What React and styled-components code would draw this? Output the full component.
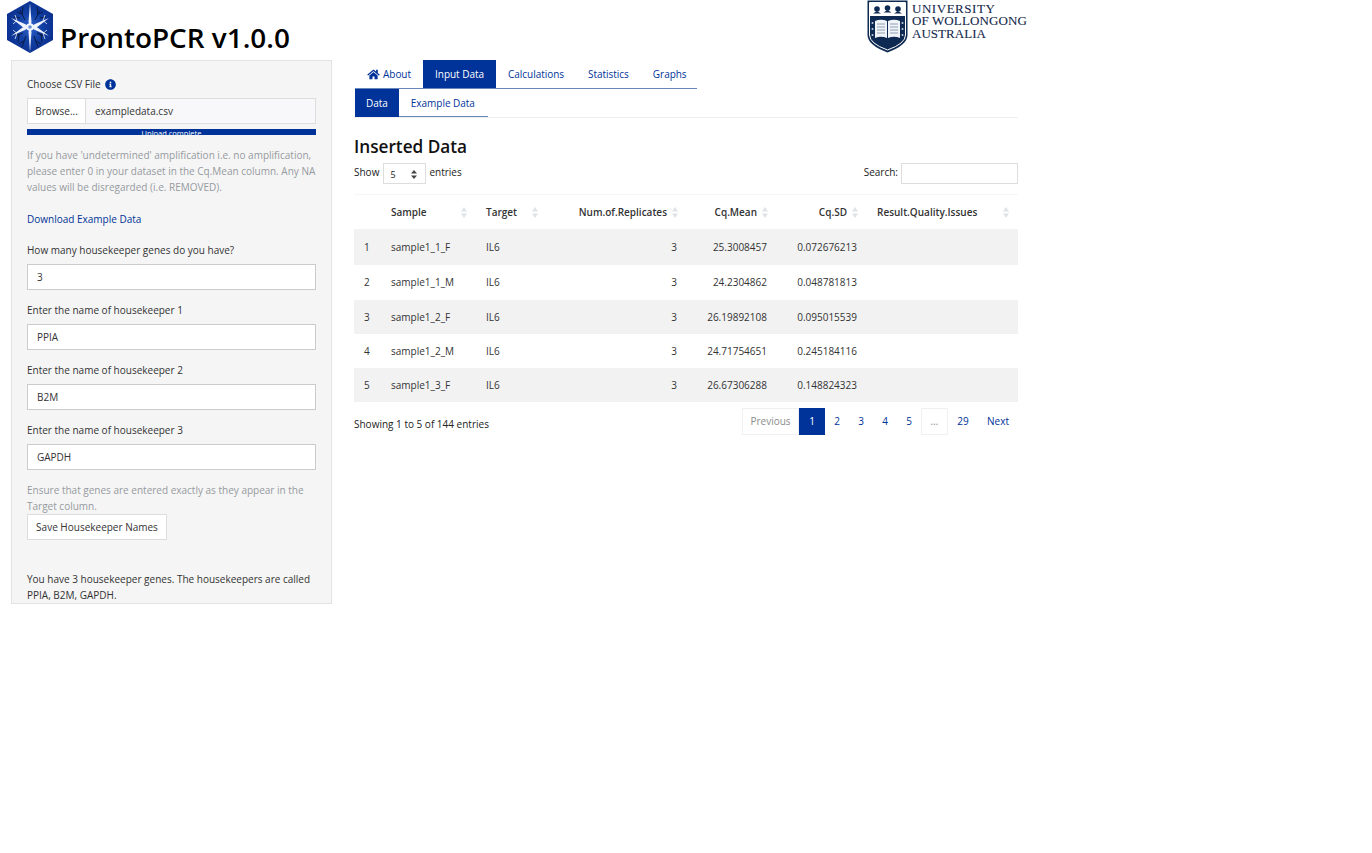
import React from 'react';
import styled, { createGlobalStyle } from 'styled-components';

const Global = createGlobalStyle`
  html, body { margin: 0; padding: 0; background: #fff; }
  body { font-family: "Open Sans", "Noto Sans", sans-serif; font-size: 10px; color: #333; }
  * { box-sizing: border-box; }
`;

const Page = styled.div`
  width: 1372px;
  height: 853px;
  overflow: hidden;
`;
const Header = styled.header`
  display: flex;
  height: 60px;
  width: 1040px;
  align-items: flex-start;
  padding-left: 6px;
`;
const Title = styled.h1`
  margin: 18px 0 0 6px;
  font-size: 27.900px;
  line-height: 38px;
  font-weight: 600;
  color: #000;
  white-space: nowrap;
`;
const UowLogo = styled.div`
  margin-left: auto;
  margin-right: 13px;
  display: flex;
  gap: 4px;
`;
const UowText = styled.div`
  padding-top: 3px;
`;
const UowLine = styled.div`
  font-family: "Liberation Serif", serif;
  font-size: 13px;
  height: 12.400px;
  line-height: 12.400px;
  color: #14284b;
  letter-spacing: ${p => p.$ls}px;
  white-space: nowrap;
  -webkit-text-stroke: .1px #14284b;
`;
const Body = styled.div`
  display: flex;
  align-items: flex-start;
  padding-left: 11px;
  gap: 22px;
`;
const Sidebar = styled.aside`
  width: 321px;
  height: 544px;
  background: #f5f5f5;
  border: 1px solid #e3e3e3;
  padding: 15px 15px 0;
`;
const Label = styled.div`
  line-height: 16px;
  height: 16px;
  margin-bottom: ${p => p.$mb ?? 6}px;
  display: flex;
  align-items: center;
  gap: 4px;
  white-space: nowrap;
`;
const FileRow = styled.div`
  display: flex;
  height: 26px;
`;
const BrowseBtn = styled.div`
  width: 59px;
  background: #fff;
  border: 1px solid #ddd;
  display: flex;
  align-items: center;
  justify-content: center;
`;
const FileName = styled.div`
  flex: 1;
  background: #f8f8fb;
  border: 1px solid #ddd;
  border-left: 0;
  padding-left: 9px;
  display: flex;
  align-items: center;
`;
const Progress = styled.div`
  height: 6px;
  margin-top: 5px;
  background: #003399;
  color: #fff;
  font-size: 7.500px;
  line-height: 8px;
  text-align: center;
  overflow: hidden;
`;
const Help = styled.p`
  margin: ${p => p.$mt ?? 0}px 0 0;
  color: #969a9f;
  line-height: 16px;
`;
const DownloadLink = styled.a`
  display: block;
  color: #003399;
  line-height: 16px;
  margin: 16px 0 15px;
`;
const TextInput = styled.div`
  height: 26px;
  background: #fff;
  border: 1px solid #ccc;
  padding-left: 9px;
  display: flex;
  align-items: center;
  margin-bottom: 12px;
`;
const SaveBtn = styled.div`
  width: 140px;
  height: 26px;
  background: #fff;
  border: 1px solid #ddd;
  display: flex;
  align-items: center;
  justify-content: center;
`;
const Summary = styled.p`
  margin: 31px 0 0;
  line-height: 16px;
`;
const Main = styled.main`
  width: 664px;
`;
const TabBar = styled.nav`
  display: flex;
  margin-left: 1px;
  width: 342px;
  height: 29px;
  border-bottom: 1px solid #6a86bd;
`;
const SubTabBar = styled(TabBar)`
  width: 133px;
  height: 28px;
`;
const TabRule = styled.div`
  border-bottom: 1px solid #eee;
`;
const Tab = styled.div`
  height: 28px;
  padding: 0 ${p => p.$px ?? 12}px;
  display: flex;
  align-items: center;
  gap: 3px;
  white-space: nowrap;
  letter-spacing: -.03px;
  color: ${p => (p.$active ? '#fff' : '#003399')};
  background: ${p => (p.$active ? '#003399' : 'transparent')};
`;
const Heading = styled.h3`
  margin: 19px 0 0;
  font-size: 17.200px;
  line-height: 20px;
  font-weight: 600;
  color: #111;
`;
const Controls = styled.div`
  display: flex;
  justify-content: space-between;
  align-items: center;
  height: 21px;
  margin-top: 6px;
  color: #222;
`;
const ControlGroup = styled.div`
  display: flex;
  align-items: flex-start;
  gap: 3px;
  line-height: 19px;
`;
const Select = styled.div`
  width: 43px;
  height: 21px;
  margin-left: 1px;
  border: 1px solid #ddd;
  padding: 2px 8px 0 6px;
  display: flex;
  align-items: center;
  justify-content: space-between;
  font-size: 9px;
`;
const SearchBox = styled.div`
  width: 117px;
  height: 21px;
  border: 1px solid #ddd;
`;
const Table = styled.table`
  border-collapse: collapse;
  width: 664px;
  table-layout: fixed;
  margin-top: 10px;
`;
const Th = styled.th`
  height: 34px;
  font-weight: 600;
  text-align: ${p => (p.$right ? 'right' : 'left')};
  padding: 0 20px 0 10px;
  position: relative;
  border-top: 1px solid #f6f6f6;
  white-space: nowrap;
`;
const Td = styled.td`
  height: ${p => p.$h}px;
  text-align: ${p => (p.$right ? 'right' : 'left')};
  padding: ${p => p.$h > 35 ? 1 : 0}px 10px 0;
`;
const Tr = styled.tr`
  background: ${p => (p.$odd ? '#f2f2f2' : '#fff')};
`;
const SortIcon = styled.svg`
  position: absolute;
  right: 8px;
  top: 11px;
  width: 8px;
  height: 13px;
`;
const Footer = styled.div`
  display: flex;
  justify-content: space-between;
  align-items: flex-start;
  margin-top: 6px;
  color: #222;
`;
const Info = styled.div`
  padding-top: 8px;
  line-height: 16px;
`;
const Pager = styled.div`
  display: flex;
  height: 27px;
`;
const PageItem = styled.div`
  width: ${p => p.$w ?? 24}px;
  display: flex;
  align-items: center;
  justify-content: center;
  color: ${p => (p.$active ? '#fff' : p.$muted ? '#8c8c8c' : '#003399')};
  background: ${p => (p.$active ? '#003399' : '#fff')};
  border: 1px solid ${p => (p.$active ? '#003399' : p.$border ? '#f0f0f0' : 'transparent')};
`;

const Sort = () => (
  <SortIcon viewBox="0 0 8 13">
    <path d="M4 1 L7 5.500 H1 Z" fill="#dfe3e8" />
    <path d="M4 12 L7 7.500 H1 Z" fill="#dfe3e8" />
  </SortIcon>
);

const SelectArrows = () => (
  <svg width="6" height="9" viewBox="0 0 6 9">
    <path d="M3 0 L6 3.500 H0 Z M3 9 L6 5.500 H0 Z" fill="#444" />
  </svg>
);

const Neuron = () => (
  <svg width="48" height="54" viewBox="0 0 48 54">
    <defs>
      <radialGradient id="hexFill" cx="50%" cy="50%" r="55%">
        <stop offset="0%" stopColor="#2f62cc" />
        <stop offset="50%" stopColor="#123fa3" />
        <stop offset="100%" stopColor="#0b2f8e" />
      </radialGradient>
    </defs>
    <polygon points="24,1 47,14 47,40 24,53 1,40 1,14" fill="url(#hexFill)" />
    <g stroke="#071a45" strokeWidth="1" fill="none">
      <path d="M19 20 L14 10 M16 14 L11 12 M16 14 L17 7 M14 18 L8 17" />
      <path d="M29 20 L34 10 M32 14 L37 12 M32 14 L31 7 M34 18 L40 17" />
      <path d="M17 33 L10 36 M13 35 L8 32 M13 35 L12 42" />
      <path d="M31 33 L38 36 M35 35 L40 32 M35 35 L36 42" />
      <path d="M20 36 L16 47 M18 41 L13 44 M28 36 L32 47 M30 41 L35 44" />
    </g>
    <g fill="#eef3fc">
      <polygon points="24,3 25.500,22 24,27 22.500,22" />
      <polygon points="24,52 25.500,32 24,27 22.500,32" />
      <polygon points="5,18 19,24 24,27 18,28" />
      <polygon points="43,18 29,24 24,27 30,28" />
      <polygon points="5,36 19,30 24,27 18,26.500" />
      <polygon points="43,36 29,30 24,27 30,26.500" />
    </g>
    <g stroke="#e6edfa" strokeWidth=".8" fill="none">
      <path d="M11 20.500 L7 24 M11 20.500 L9 15 M37 20.500 L41 24 M37 20.500 L39 15 M11 33.500 L7 30 M11 33.500 L9 39 M37 33.500 L41 30 M37 33.500 L39 39" />
    </g>
    <circle cx="24" cy="27" r="3.800" fill="#f2f6fe" />
    <circle cx="24" cy="27" r="1.800" fill="#6a90d6" />
  </svg>
);

const Shield = () => (
  <svg width="41" height="53" viewBox="0 0 41 53">
    <path d="M.5 .5 H40.500 V35 Q40.500 45 20.500 52.500 Q.5 45 .5 35 Z" fill="#0f2a52" />
    <path d="M2.500 2.500 H38.500 V35 Q38.500 43.500 20.500 50 Q2.500 43.500 2.500 35 Z" fill="none" stroke="#fff" strokeWidth="1" />
    <rect x="3" y="3" width="35" height="13" fill="#fff" />
    <g fill="#0f2a52">
      <circle cx="10" cy="9" r="2.800" />
      <circle cx="20.500" cy="8" r="2.800" />
      <circle cx="31" cy="9" r="2.800" />
      <path d="M6 13.500 L10 11 L14 13.500 Z M16.500 12.500 L20.500 10 L24.500 12.500 Z M27 13.500 L31 11 L35 13.500 Z" />
    </g>
    <path d="M8 21 Q14 18.500 20 21 V38 Q14 35.500 8 38 Z M21 21 Q27 18.500 33 21 V38 Q27 35.500 21 38 Z" fill="#f0f3f7" />
    <path d="M10 24 H18 M10 27 H18 M10 30 H18 M10 33 H18 M23 24 H31 M23 27 H31 M23 30 H31 M23 33 H31" stroke="#7b8aa3" strokeWidth=".8" />
    <g fill="#c5cedb">
      <circle cx="5.500" cy="23" r="1" /><circle cx="5.500" cy="29" r="1" /><circle cx="5.500" cy="35" r="1" />
      <circle cx="35.500" cy="23" r="1" /><circle cx="35.500" cy="29" r="1" /><circle cx="35.500" cy="35" r="1" />
    </g>
  </svg>
);

const Home = () => (
  <svg width="13" height="11" viewBox="0 0 576 512">
    <path fill="#003399" d="M280 148 96 300v164c0 9 7 16 16 16l112-.3c9 0 16-7 16-16V368c0-9 7-16 16-16h64c9 0 16 7 16 16v95.600c0 9 7 16 16 16l112 .4c9 0 16-7 16-16V300L296 148c-4-4-12-4-16 0zM572 251l-84-69V44c0-7-5-12-12-12h-56c-7 0-12 5-12 12v72L318 43c-18-15-43-15-61 0L4 251c-5 4-6 12-2 17l26 31c4 5 12 6 17 2L280 107c4-4 12-4 16 0l235 194c5 4 13 3 17-2l26-31c4-5 3-13-2-17z" />
  </svg>
);

const InfoIcon = () => (
  <svg width="11" height="11" viewBox="0 0 512 512">
    <path fill="#003399" d="M256 8C119 8 8 119 8 256s111 248 248 248 248-111 248-248S393 8 256 8zm0 110c23 0 42 19 42 42s-19 42-42 42-42-19-42-42 19-42 42-42zm56 254c0 7-5 12-12 12h-88c-7 0-12-5-12-12v-24c0-7 5-12 12-12h12v-64h-12c-7 0-12-5-12-12v-24c0-7 5-12 12-12h64c7 0 12 5 12 12v100h12c7 0 12 5 12 12v24z" />
  </svg>
);

const rows = [
  ['1', 'sample1_1_F', 'IL6', '3', '25.3008457', '0.072676213', 36],
  ['2', 'sample1_1_M', 'IL6', '3', '24.2304862', '0.048781813', 35],
  ['3', 'sample1_2_F', 'IL6', '3', '26.19892108', '0.095015539', 34],
  ['4', 'sample1_2_M', 'IL6', '3', '24.71754651', '0.245184116', 34],
  ['5', 'sample1_3_F', 'IL6', '3', '26.67306288', '0.148824323', 34],
];

const colWidths = [27, 95, 71, 140, 90, 90, 151];

export default function App() {
  return (
    <Page>
      <Global />
      <Header>
        <Neuron />
        <Title>ProntoPCR v1.0.0</Title>
        <UowLogo>
          <Shield />
          <UowText>
            <UowLine $ls={0.55}>UNIVERSITY</UowLine>
            <UowLine $ls={0.12}>OF WOLLONGONG</UowLine>
            <UowLine $ls={0.05}>AUSTRALIA</UowLine>
          </UowText>
        </UowLogo>
      </Header>
      <Body>
        <Sidebar>
          <Label $mb={6}>Choose CSV File <InfoIcon /></Label>
          <FileRow>
            <BrowseBtn>Browse...</BrowseBtn>
            <FileName>exampledata.csv</FileName>
          </FileRow>
          <Progress>Upload complete</Progress>
          <Help $mt={12}>If you have 'undetermined' amplification i.e. no amplification, please enter 0 in your dataset in the Cq.Mean column. Any NA values will be disregarded (i.e. REMOVED).</Help>
          <DownloadLink>Download Example Data</DownloadLink>
          <Label>How many housekeeper genes do you have?</Label>
          <TextInput>3</TextInput>
          <Label>Enter the name of housekeeper 1</Label>
          <TextInput>PPIA</TextInput>
          <Label>Enter the name of housekeeper 2</Label>
          <TextInput>B2M</TextInput>
          <Label>Enter the name of housekeeper 3</Label>
          <TextInput>GAPDH</TextInput>
          <Help>Ensure that genes are entered exactly as they appear in the Target column.</Help>
          <SaveBtn>Save Housekeeper Names</SaveBtn>
          <Summary>You have 3 housekeeper genes. The housekeepers are called PPIA, B2M, GAPDH.</Summary>
        </Sidebar>
        <Main>
          <TabBar>
            <Tab><Home /> About</Tab>
            <Tab $active>Input Data</Tab>
            <Tab>Calculations</Tab>
            <Tab>Statistics</Tab>
            <Tab>Graphs</Tab>
          </TabBar>
          <TabRule>
            <SubTabBar>
              <Tab $active $px={11}>Data</Tab>
              <Tab>Example Data</Tab>
            </SubTabBar>
          </TabRule>
          <Heading>Inserted Data</Heading>
          <Controls>
            <ControlGroup>Show <Select>5 <SelectArrows /></Select> entries</ControlGroup>
            <ControlGroup>Search: <SearchBox /></ControlGroup>
          </Controls>
          <Table>
            <colgroup>
              {colWidths.map((w, i) => <col key={i} width={w} />)}
            </colgroup>
            <thead>
              <tr>
                <Th />
                <Th>Sample<Sort /></Th>
                <Th>Target<Sort /></Th>
                <Th $right>Num.of.Replicates<Sort /></Th>
                <Th $right>Cq.Mean<Sort /></Th>
                <Th $right>Cq.SD<Sort /></Th>
                <Th>Result.Quality.Issues<Sort /></Th>
              </tr>
            </thead>
            <tbody>
              {rows.map((r, i) => (
                <Tr key={r[0]} $odd={i % 2 === 0}>
                  <Td $h={r[6]}>{r[0]}</Td>
                  <Td $h={r[6]}>{r[1]}</Td>
                  <Td $h={r[6]}>{r[2]}</Td>
                  <Td $h={r[6]} $right>{r[3]}</Td>
                  <Td $h={r[6]} $right>{r[4]}</Td>
                  <Td $h={r[6]} $right>{r[5]}</Td>
                  <Td $h={r[6]} />
                </Tr>
              ))}
            </tbody>
          </Table>
          <Footer>
            <Info>Showing 1 to 5 of 144 entries</Info>
            <Pager>
              <PageItem $muted $border $w={57}>Previous</PageItem>
              <PageItem $active $w={26}>1</PageItem>
              <PageItem>2</PageItem>
              <PageItem>3</PageItem>
              <PageItem>4</PageItem>
              <PageItem>5</PageItem>
              <PageItem $muted $border $w={27}>…</PageItem>
              <PageItem $w={30}>29</PageItem>
              <PageItem $w={40}>Next</PageItem>
            </Pager>
          </Footer>
        </Main>
      </Body>
    </Page>
  );
}
